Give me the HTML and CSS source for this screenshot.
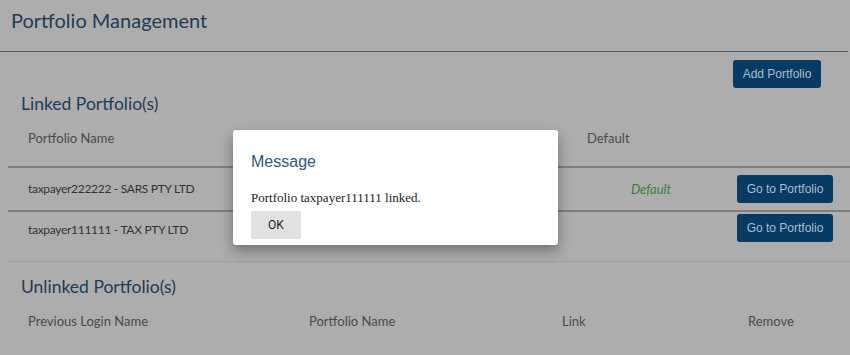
FILE: index.html
```html
<!DOCTYPE html>
<html>
<head>
<meta charset="utf-8">
<link rel="stylesheet" href="styles.css">
</head>
<body>
<div class="page">
  <header class="page-header">
    <h1 class="page-title">Portfolio Management</h1>
  </header>
  <main class="content">
    <div class="toolbar">
      <button class="btn btn-primary btn-add">Add Portfolio</button>
    </div>
    <h2 class="section-title linked-title">Linked Portfolio(s)</h2>
    <div class="linked-table">
      <div class="cell head">Portfolio Name</div>
      <div class="cell head">Default</div>
      <div class="cell head"></div>

      <div class="cell name row-one">taxpayer222222 - SARS PTY LTD</div>
      <div class="cell default-mark row-one">Default</div>
      <div class="cell action row-one"><button class="btn btn-primary">Go to Portfolio</button></div>

      <div class="cell name row-two">taxpayer111111 - TAX PTY LTD</div>
      <div class="cell row-two"></div>
      <div class="cell action row-two"><button class="btn btn-primary">Go to Portfolio</button></div>
    </div>
    <div class="section-sep"></div>
    <h2 class="section-title unlinked-title">Unlinked Portfolio(s)</h2>
    <div class="unlinked-table">
      <div class="cell head">Previous Login Name</div>
      <div class="cell head">Portfolio Name</div>
      <div class="cell head">Link</div>
      <div class="cell head">Remove</div>
    </div>
  </main>
</div>
<div class="dialog">
  <h3 class="dialog-title">Message</h3>
  <p class="dialog-text">Portfolio taxpayer111111 linked.</p>
  <button class="btn btn-ok">OK</button>
</div>
</body>
</html>
```

FILE: styles.css
```css
* { box-sizing: border-box; }
html, body {
  margin: 0;
  padding: 0;
  background: #adadad;
  width: 850px;
  height: 355px;
  overflow: hidden;
  font-family: Lato, "Open Sans", sans-serif;
}
.page { width: 850px; }
.page-header {
  height: 52px;
  border-bottom: 1px solid #4e5d6c;
  padding: 7px 11px 0;
  margin-right: 2px;
}
.page-title {
  margin: 0;
  font-weight: 400;
  font-size: 20px;
  line-height: 26px;
  color: #1f3b56;
}
.content { padding-left: 8px; }
.toolbar {
  display: flex;
  justify-content: flex-end;
  padding: 8px 29px 0 0;
  height: 36px;
}
.btn {
  font-family: "Liberation Sans", Arial, sans-serif;
  border: none;
  cursor: pointer;
}
.btn-primary {
  background: #073b63;
  color: #aebdcc;
  font-size: 12px;
  border-radius: 3px;
  height: 28px;
  padding: 0 10px;
}
.btn-add { width: 88px; padding: 0; }
.section-title {
  margin: 0;
  padding-left: 13px;
  font-weight: 400;
  font-size: 17.5px;
  line-height: 24px;
  color: #1f3b56;
}
.linked-title { margin-top: 4px; }
.linked-table {
  display: grid;
  grid-template-columns: 1fr 168px 115px;
}
.cell {
  font-size: 13px;
  line-height: 16px;
  color: #4a4a4a;
  padding-left: 20px;
  display: flex;
  align-items: center;
}
.head {
  align-items: flex-start;
  padding-top: 14px;
}
.linked-table .head {
  height: 52px;
  border-bottom: 2px solid #7e7e7e;
}
.name {
  color: #333;
  font-size: 12px;
  letter-spacing: -0.3px;
}
.row-one {
  height: 44px;
  border-bottom: 2px solid #7e7e7e;
}
.row-two {
  height: 49px;
  align-items: flex-start;
  padding-top: 2px;
}
.row-two.name { padding-top: 10px; }
.default-mark {
  font-style: italic;
  color: #3f7b3d;
  justify-content: center;
  padding-left: 0;
  font-size: 13px;
}
.action {
  justify-content: flex-end;
  padding-left: 0;
  padding-right: 17px;
}
.action .btn { width: 96px; padding: 0; }
.section-sep {
  border-top: 1px solid #a0a0a0;
}
.unlinked-title { margin-top: 13px; }
.unlinked-table {
  display: grid;
  grid-template-columns: 281px 253px 186px 122px;
}
.unlinked-table .head { height: 44px; }
.dialog {
  position: absolute;
  left: 233px;
  top: 130px;
  width: 325px;
  height: 115px;
  background: #fff;
  border-radius: 3px;
  box-shadow: 0 6px 14px rgba(0,0,0,0.35);
  padding: 22px 18px 0;
}
.dialog-title {
  margin: 0;
  font-family: "Liberation Sans", Arial, sans-serif;
  font-weight: 400;
  font-size: 16px;
  line-height: 20px;
  color: #2c5a78;
}
.dialog-text {
  margin: 18px 0 0;
  font-family: "Liberation Serif", "Times New Roman", serif;
  font-size: 13px;
  line-height: 16px;
  color: #222;
}
.btn-ok {
  margin-top: 5px;
  width: 50px;
  height: 28px;
  background: #e1e1e1;
  color: #222;
  font-family: Roboto, "Liberation Sans", sans-serif;
  font-size: 12px;
  border-radius: 2px;
}
```
